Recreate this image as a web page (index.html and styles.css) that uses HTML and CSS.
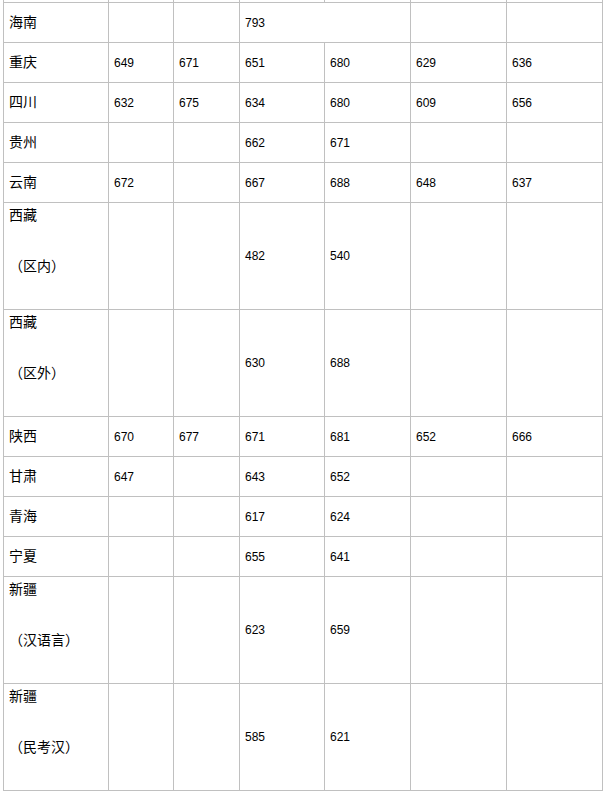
FILE: index.html
```html
<!DOCTYPE html>
<html lang="zh">
<head>
<meta charset="utf-8">
<title>分数线</title>
<link rel="stylesheet" href="styles.css">
</head>
<body>
<div class="page">
<table class="scores">
  <colgroup>
    <col class="c1"><col class="c2"><col class="c3"><col class="c4"><col class="c5"><col class="c6"><col class="c7">
  </colgroup>
  <tbody>
    <tr class="cut"><td></td><td></td><td></td><td></td><td></td><td></td><td></td></tr>
    <tr><td class="prov">海南</td><td></td><td></td><td colspan="2">793</td><td></td><td></td></tr>
    <tr><td class="prov">重庆</td><td>649</td><td>671</td><td>651</td><td>680</td><td>629</td><td>636</td></tr>
    <tr><td class="prov">四川</td><td>632</td><td>675</td><td>634</td><td>680</td><td>609</td><td>656</td></tr>
    <tr><td class="prov">贵州</td><td></td><td></td><td>662</td><td>671</td><td></td><td></td></tr>
    <tr><td class="prov">云南</td><td>672</td><td></td><td>667</td><td>688</td><td>648</td><td>637</td></tr>
    <tr class="tall"><td class="prov multi"><p>西藏</p><p>（区内）</p></td><td></td><td></td><td>482</td><td>540</td><td></td><td></td></tr>
    <tr class="tall"><td class="prov multi"><p>西藏</p><p>（区外）</p></td><td></td><td></td><td>630</td><td>688</td><td></td><td></td></tr>
    <tr><td class="prov">陕西</td><td>670</td><td>677</td><td>671</td><td>681</td><td>652</td><td>666</td></tr>
    <tr><td class="prov">甘肃</td><td>647</td><td></td><td>643</td><td>652</td><td></td><td></td></tr>
    <tr><td class="prov">青海</td><td></td><td></td><td>617</td><td>624</td><td></td><td></td></tr>
    <tr><td class="prov">宁夏</td><td></td><td></td><td>655</td><td>641</td><td></td><td></td></tr>
    <tr class="tall"><td class="prov multi"><p>新疆</p><p>（汉语言）</p></td><td></td><td></td><td>623</td><td>659</td><td></td><td></td></tr>
    <tr class="tall"><td class="prov multi"><p>新疆</p><p>（民考汉）</p></td><td></td><td></td><td>585</td><td>621</td><td></td><td></td></tr>
  </tbody>
</table>
</div>
</body>
</html>
```
FILE: styles.css
```css
html, body {
  margin: 0;
  padding: 0;
  background: #ffffff;
}

.page {
  padding-left: 3px;
}

.scores {
  border-collapse: collapse;
  table-layout: fixed;
  width: 600px;
  font-family: "Liberation Sans", Arial, "Noto Sans CJK SC", sans-serif;
  font-size: 12px;
  color: #000000;
}

.c1 { width: 105px; }
.c2 { width: 65px; }
.c3 { width: 66px; }
.c4 { width: 85px; }
.c5 { width: 86px; }
.c6 { width: 96px; }
.c7 { width: 96px; }

.scores td {
  border: 1px solid #c0c0c0;
  padding: 0 5px;
  height: 39px;
  vertical-align: middle;
  text-align: left;
  line-height: 16px;
}

.scores .cut td {
  border-top: none;
  height: 2px;
  line-height: 0;
  font-size: 0;
}

.scores .prov {
  font-family: "Noto Sans CJK SC", sans-serif;
  font-size: 14px;
  padding-bottom: 4px;
  height: 35px;
}

.scores .tall td {
  height: auto;
}

.scores .multi {
  padding: 0 5px 4px 5px;
}

.multi p {
  margin: 0 0 29px 0;
  line-height: 22px;
}
```
